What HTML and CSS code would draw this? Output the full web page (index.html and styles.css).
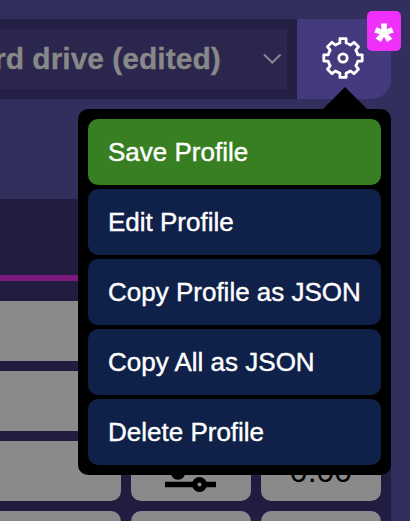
FILE: index.html
```html
<!DOCTYPE html>
<html lang="en">
<head>
<meta charset="utf-8">
<title>Profile</title>
<link rel="stylesheet" href="styles.css">
</head>
<body>
<header class="toolbar">
  <div class="select-frame">
    <div class="select"><span class="select-label">rd drive (edited)</span>
      <svg class="chevron" width="20" height="12" viewBox="0 0 20 12"><path d="M2 1.5L10.3 9.5L18.6 1.5"/></svg>
    </div>
  </div>
  <button class="gear-button" aria-label="Profile options">
    <svg class="gear" width="46" height="46" viewBox="-23 -23 46 46"><path d="M-3.1 -15L-3.1 -19.4H3.1L3.1 -15Q5.5 -14.4 7.6 -13L11 -15.7L15.5 -11.2L12.8 -7.8Q14.2 -5.6 14.8 -3.1H19.2V3.1H14.8Q14.2 5.6 12.8 7.8L15.5 11.2L11 15.7L7.6 13Q5.5 14.4 3.1 15V19.4H-3.1V15Q-5.5 14.4 -7.6 13L-11 15.7L-15.5 11.2L-12.8 7.8Q-14.2 5.6 -14.8 3.1H-19.2V-3.1H-14.8Q-14.2 -5.6 -12.8 -7.8L-15.5 -11.2L-11 -15.7L-7.6 -13Q-5.5 -14.4 -3.1 -15Z"/><circle r="4.2"/></svg>
    <span class="badge">*</span>
  </button>
</header>
<main class="panel">
  <div class="divider"></div>
  <div class="grid">
    <div class="cell"></div><div class="cell"></div><div class="cell"></div>
    <div class="cell"></div><div class="cell"></div><div class="cell"></div>
    <div class="cell"></div>
    <div class="cell">
      <svg class="sliders" width="52" height="48" viewBox="0 0 52 48"><path d="M0 8H51M0 23H51M0 37.5H51"/><circle cx="34" cy="8" r="4.5"/><circle cx="13" cy="25.5" r="4.5"/><circle cx="34.5" cy="37.5" r="4.8"/></svg>
    </div>
    <div class="cell">0.00</div>
    <div class="cell"></div><div class="cell"></div><div class="cell"></div>
  </div>
</main>
<nav class="menu">
  <button class="item save">Save Profile</button>
  <button class="item">Edit Profile</button>
  <button class="item">Copy Profile as JSON</button>
  <button class="item">Copy All as JSON</button>
  <button class="item">Delete Profile</button>
</nav>
</body>
</html>
```
FILE: styles.css
```css
* { box-sizing: border-box; }
html { overflow: hidden; }
body {
  margin: 0;
  height: 521px;
  padding-top: 19px;
  position: relative;
  overflow: hidden;
  background: #322e5e;
  font-family: "Liberation Sans", Arial, sans-serif;
}
button { border: 0; font: inherit; }
.toolbar { display: flex; height: 80px; margin-right: 19px; }
.select-frame { flex: 1; padding: 10px 10px 10px 0; background: #241f44; }
.select {
  display: flex;
  align-items: center;
  justify-content: space-between;
  height: 60px;
  padding-right: 5px;
  background: #2b264d;
  color: #888;
  font-size: 30px;
  font-weight: bold;
  white-space: nowrap;
  -webkit-text-stroke: 0.3px #888;
}
.select-label { margin-left: -6px; }
.chevron { fill: none; stroke: #888; stroke-width: 2; }
.gear-button {
  position: relative;
  display: flex;
  width: 94px;
  padding: 16px 0 0 23px;
  background: #433b7d;
  border-radius: 0 0 20px 0;
}
.gear { fill: none; stroke: #fff; stroke-width: 2.8; stroke-linejoin: round; }
.badge {
  position: absolute;
  top: -8px;
  right: -10px;
  width: 34px;
  height: 40px;
  border-radius: 5px;
  background: #ee30fa;
  color: #fff;
  font-size: 46px;
  font-weight: bold;
  line-height: 58px;
  text-align: center;
  -webkit-text-stroke: 0.9px #fff;
}
.panel {
  height: 322px;
  margin: 100px 19px 0 0;
  padding-top: 76px;
  overflow: hidden;
  background: #221d40;
}
.divider { height: 6px; margin-bottom: 20px; background: #7c1a80; }
.grid {
  display: grid;
  grid-template-columns: 121px 120px 120px;
  grid-auto-rows: 60px;
  gap: 10px;
}
.cell {
  display: flex;
  align-items: center;
  justify-content: center;
  border-radius: 10px;
  background: #8a8a8a;
  color: #000;
  font-size: 32px;
}
.cell:nth-child(3n + 1) { border-radius: 0 10px 10px 0; }
.sliders { fill: #8a8a8a; stroke: #000; stroke-width: 5.5; }
.menu {
  position: absolute;
  top: 109px;
  left: 78px;
  display: flex;
  flex-direction: column;
  gap: 4px;
  width: 313px;
  padding: 10px;
  border-radius: 10px;
  background: #000;
}
.menu::before {
  content: "";
  position: absolute;
  top: -22px;
  left: 245px;
  border: 22px solid transparent;
  border-top: 0;
  border-bottom-color: #000;
}
.item {
  height: 66px;
  padding: 0 20px;
  border-radius: 10px;
  background: #0f2148;
  color: #fff;
  font-size: 26px;
  text-align: left;
  white-space: nowrap;
  -webkit-text-stroke: 0.4px #fff;
}
.save { background: #387f22; }
```
